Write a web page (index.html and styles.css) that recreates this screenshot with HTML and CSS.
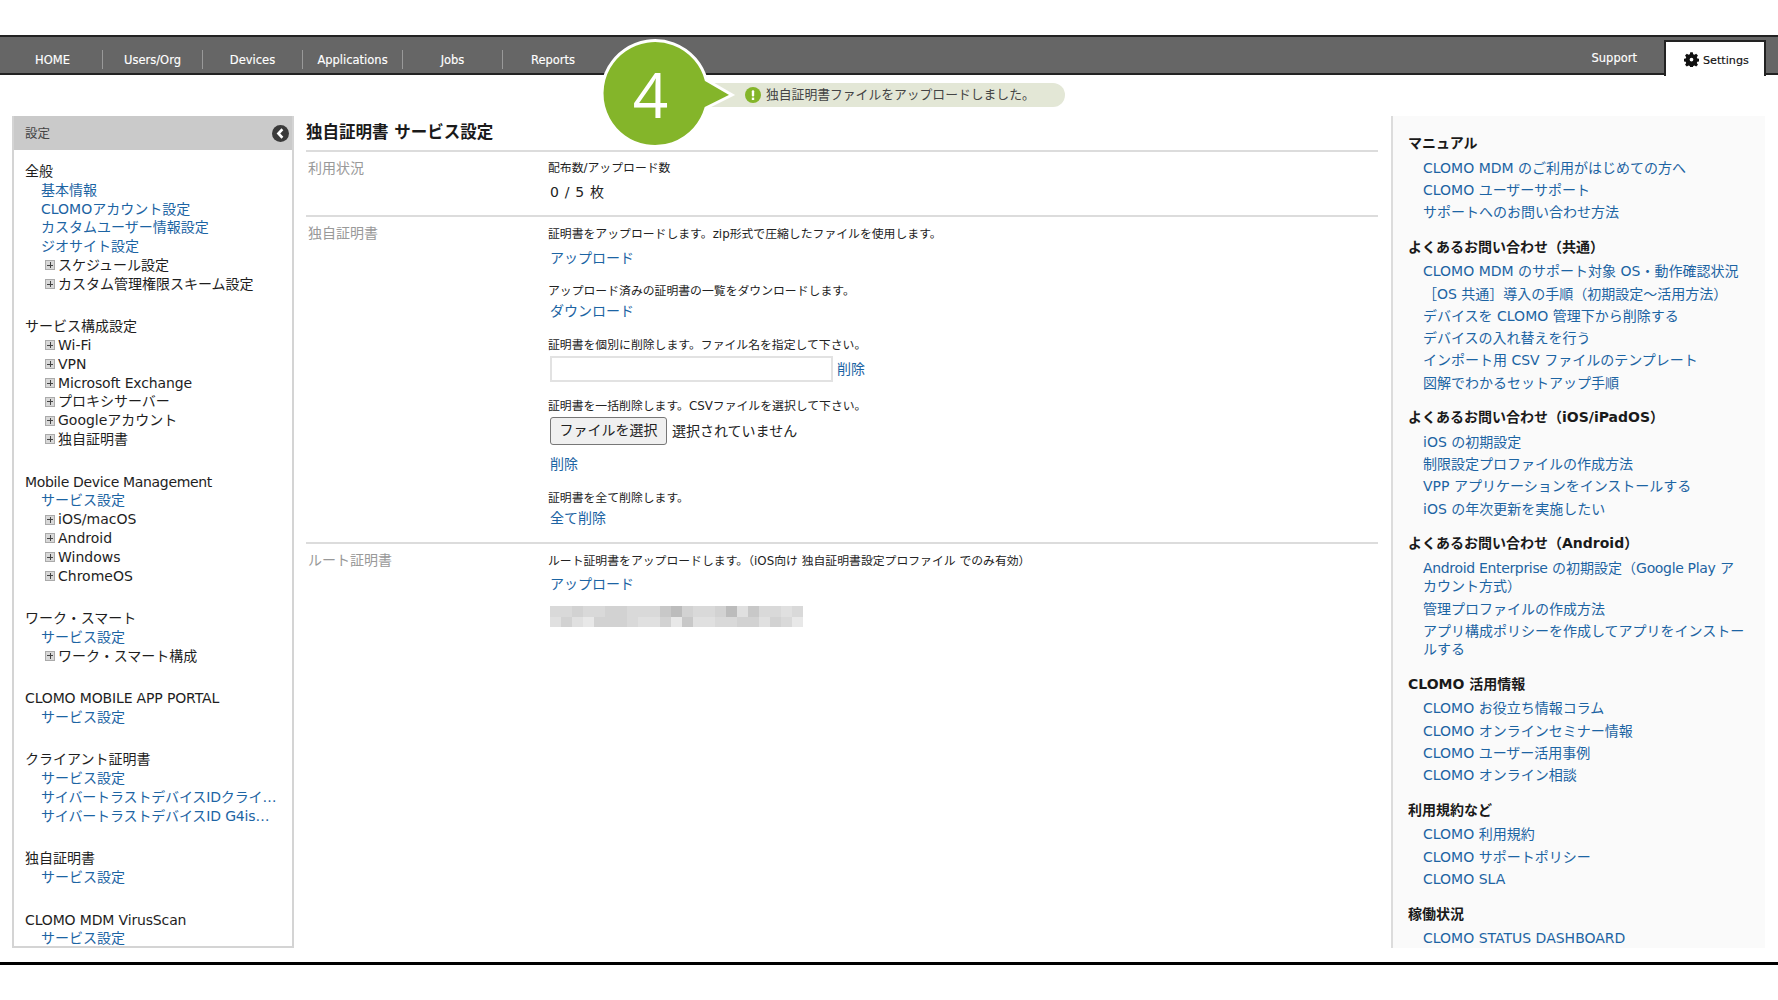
FILE: index.html
```html
<!DOCTYPE html>
<html lang="ja">
<head>
<meta charset="utf-8">
<title>CLOMO</title>
<link rel="stylesheet" href="styles.css">
</head>
<body>
<div class="frame">
  <header class="nav">
    <ul class="nav-items">
      <li>HOME</li><li>Users/Org</li><li>Devices</li><li>Applications</li><li>Jobs</li><li>Reports</li>
    </ul>
    <div class="nav-right">
      <span class="support">Support</span>
      <span class="settings-tab">
        <svg class="gear" viewBox="0 0 24 24"><path d="M10 .5h4l.7 3.200 2 .8 2.800-1.800 2.800 2.800-1.800 2.800.8 2 3.200.7v4l-3.200.7-.8 2 1.800 2.800-2.800 2.800-2.800-1.800-2 .8-.7 3.200h-4l-.7-3.200-2-.8-2.800 1.800-2.800-2.800 1.800-2.800-.8-2-3.200-.7v-4l3.200-.7.8-2-1.800-2.800 2.800-2.800 2.800 1.800 2-.8zM12 9a3 3 0 1 0 0 6 3 3 0 0 0 0-6z" fill-rule="evenodd"/></svg>
        <span class="settings-label">Settings</span>
      </span>
    </div>
  </header>

  <div class="content">
    <aside class="sidebar">
      <div class="side-head"><span class="side-label">設定</span>
        <svg class="collapse" viewBox="0 0 16 16"><circle cx="8" cy="8" r="8" fill="#3a3a3a"/><path d="M9.800 4 6 8l3.800 4" fill="none" stroke="#fff" stroke-width="2.400"/></svg>
      </div>
      <div class="side-body">
        <div class="group">
          <div class="g-title">全般</div>
          <a class="s-link">基本情報</a>
          <a class="s-link">CLOMOアカウント設定</a>
          <a class="s-link">カスタムユーザー情報設定</a>
          <a class="s-link">ジオサイト設定</a>
          <div class="s-tree"><i class="plus"></i>スケジュール設定</div>
          <div class="s-tree"><i class="plus"></i>カスタム管理権限スキーム設定</div>
        </div>
        <div class="group">
          <div class="g-title">サービス構成設定</div>
          <div class="s-tree"><i class="plus"></i>Wi-Fi</div>
          <div class="s-tree"><i class="plus"></i>VPN</div>
          <div class="s-tree lat-s"><i class="plus"></i>Microsoft Exchange</div>
          <div class="s-tree"><i class="plus"></i>プロキシサーバー</div>
          <div class="s-tree"><i class="plus"></i>Googleアカウント</div>
          <div class="s-tree"><i class="plus"></i>独自証明書</div>
        </div>
        <div class="group">
          <div class="g-title lat">Mobile Device Management</div>
          <a class="s-link">サービス設定</a>
          <div class="s-tree"><i class="plus"></i>iOS/macOS</div>
          <div class="s-tree"><i class="plus"></i>Android</div>
          <div class="s-tree"><i class="plus"></i>Windows</div>
          <div class="s-tree"><i class="plus"></i>ChromeOS</div>
        </div>
        <div class="group">
          <div class="g-title">ワーク・スマート</div>
          <a class="s-link">サービス設定</a>
          <div class="s-tree"><i class="plus"></i>ワーク・スマート構成</div>
        </div>
        <div class="group">
          <div class="g-title lat-s">CLOMO MOBILE APP PORTAL</div>
          <a class="s-link">サービス設定</a>
        </div>
        <div class="group">
          <div class="g-title">クライアント証明書</div>
          <a class="s-link">サービス設定</a>
          <a class="s-link lat-s">サイバートラストデバイスIDクライ…</a>
          <a class="s-link lat-s">サイバートラストデバイスID G4is…</a>
        </div>
        <div class="group">
          <div class="g-title">独自証明書</div>
          <a class="s-link">サービス設定</a>
        </div>
        <div class="group">
          <div class="g-title lat-s">CLOMO MDM VirusScan</div>
          <a class="s-link">サービス設定</a>
        </div>
      </div>
    </aside>

    <main class="main">
      <h1 class="title">独自証明書 サービス設定</h1>
      <section class="row">
        <div class="label">利用状況</div>
        <div class="body first">
          <p class="note">配布数/アップロード数</p>
          <p class="count">0 / 5 枚</p>
        </div>
      </section>
      <section class="row">
        <div class="label">独自証明書</div>
        <div class="body">
          <p class="note">証明書をアップロードします。zip形式で圧縮したファイルを使用します。</p>
          <a class="m-link">アップロード</a>
          <p class="note gap">アップロード済みの証明書の一覧をダウンロードします。</p>
          <a class="m-link tight">ダウンロード</a>
          <p class="note gap2">証明書を個別に削除します。ファイル名を指定して下さい。</p>
          <div class="input-line"><span class="text-input"></span><a class="m-link inline">削除</a></div>
          <p class="note gap2">証明書を一括削除します。CSVファイルを選択して下さい。</p>
          <div class="file-line"><span class="file-btn">ファイルを選択</span><span class="file-none">選択されていません</span></div>
          <a class="m-link del">削除</a>
          <p class="note gap2">証明書を全て削除します。</p>
          <a class="m-link close">全て削除</a>
        </div>
      </section>
      <section class="row">
        <div class="label">ルート証明書</div>
        <div class="body">
          <p class="note">ルート証明書をアップロードします。（iOS向け 独自証明書設定プロファイル でのみ有効）</p>
          <a class="m-link root">アップロード</a>
          <div class="blur">
            <i class="b2"></i><i class="b2"></i><i class="b3"></i><i class="b2"></i><i class="b2"></i><i class="b3"></i><i class="b3"></i><i class="b2"></i><i class="b2"></i><i class="b2"></i><i class="b4"></i><i class="b5"></i><i class="b3"></i><i class="b2"></i><i class="b2"></i><i class="b3"></i><i class="b5"></i><i class="b1"></i><i class="b4"></i><i class="b2"></i><i class="b2"></i><i class="b1"></i><i class="b2"></i>
            <i class="b1"></i><i class="b3"></i><i class="b1"></i><i class="b0"></i><i class="b3"></i><i class="b3"></i><i class="b3"></i><i class="b2"></i><i class="b1"></i><i class="b1"></i><i class="b3"></i><i class="b0"></i><i class="b4"></i><i class="b1"></i><i class="b1"></i><i class="b2"></i><i class="b2"></i><i class="b3"></i><i class="b3"></i><i class="b1"></i><i class="b3"></i><i class="b2"></i><i class="b0"></i>
          </div>
        </div>
      </section>
    </main>

    <aside class="help">
      <h2>マニュアル</h2>
      <ul>
        <li>CLOMO MDM のご利用がはじめての方へ</li>
        <li>CLOMO ユーザーサポート</li>
        <li>サポートへのお問い合わせ方法</li>
      </ul>
      <h2>よくあるお問い合わせ（共通）</h2>
      <ul>
        <li>CLOMO MDM のサポート対象 OS・動作確認状況</li>
        <li>［OS 共通］導入の手順（初期設定〜活用方法）</li>
        <li>デバイスを CLOMO 管理下から削除する</li>
        <li>デバイスの入れ替えを行う</li>
        <li>インポート用 CSV ファイルのテンプレート</li>
        <li>図解でわかるセットアップ手順</li>
      </ul>
      <h2>よくあるお問い合わせ（iOS/iPadOS）</h2>
      <ul>
        <li>iOS の初期設定</li>
        <li>制限設定プロファイルの作成方法</li>
        <li>VPP アプリケーションをインストールする</li>
        <li>iOS の年次更新を実施したい</li>
      </ul>
      <h2>よくあるお問い合わせ（Android）</h2>
      <ul>
        <li><span class="lat">Android Enterprise</span> の初期設定（<span class="lat">Google Play</span> ア<br>カウント方式）</li>
        <li>管理プロファイルの作成方法</li>
        <li>アプリ構成ポリシーを作成してアプリをインストー<br>ルする</li>
      </ul>
      <h2>CLOMO 活用情報</h2>
      <ul>
        <li>CLOMO お役立ち情報コラム</li>
        <li>CLOMO オンラインセミナー情報</li>
        <li>CLOMO ユーザー活用事例</li>
        <li>CLOMO オンライン相談</li>
      </ul>
      <h2>利用規約など</h2>
      <ul>
        <li>CLOMO 利用規約</li>
        <li>CLOMO サポートポリシー</li>
        <li>CLOMO SLA</li>
      </ul>
      <h2>稼働状況</h2>
      <ul>
        <li>CLOMO STATUS DASHBOARD</li>
      </ul>
    </aside>
  </div>
</div>

<div class="flash">
  <svg class="flash-icon" viewBox="0 0 16 16"><circle cx="8" cy="8" r="8" fill="#84b52a"/><rect x="6.800" y="3.200" width="2.400" height="6.400" rx="1" fill="#fff"/><rect x="6.800" y="10.600" width="2.400" height="2.400" fill="#fff"/></svg>
  <span>独自証明書ファイルをアップロードしました。</span>
</div>
<svg class="badge" viewBox="0 0 140 120">
  <path d="M108.250 45 134 60 108 73A53 53 0 1 1 108.250 45z" fill="#84b52a" stroke="#fff" stroke-width="3"/>
  <text class="badge-num" x="52.500" y="83" text-anchor="middle">4</text>
</svg>
</body>
</html>
```
FILE: styles.css
```css
* { box-sizing: border-box; }
html, body { margin: 0; padding: 0; background: #fff; }
body {
  height: 1000px;
  overflow: hidden;
  position: relative;
  font-family: "DejaVu Sans", "Noto Sans CJK JP", sans-serif;
  font-size: 14px;
  color: #222;
}
p, h1, h2, ul { margin: 0; padding: 0; }
ul { list-style: none; }
a { display: block; color: #1c64a3; }
.lat { letter-spacing: -0.33px; }
.lat-s { letter-spacing: -0.15px; }

.frame {
  margin-top: 35px;
  height: 930px;
  border-bottom: 3px solid #000;
  display: flex;
  flex-direction: column;
}

/* top navigation */
.nav {
  height: 40px;
  flex: none;
  background: #666;
  border-top: 2px solid #222;
  border-bottom: 2px solid #222;
  display: flex;
  justify-content: space-between;
  padding-left: 3px;
  color: #fff;
  font-size: 11.500px;
  -webkit-text-stroke: 0.15px;
}
.nav-items { display: flex; padding-top: 13px; }
.nav-items li {
  width: 100px;
  height: 19px;
  line-height: 21px;
  text-align: center;
  border-right: 1px solid #999;
}
.nav-items li:last-child { border-right: 0; }
.nav-right { display: flex; padding-right: 12px; }
.support { margin-right: 27px; padding-top: 14px; }
.settings-tab {
  width: 102px;
  height: 36px;
  margin-top: 3px;
  background: #fff;
  color: #111;
  border: 2px solid #222;
  border-bottom: 0;
  display: flex;
  align-items: center;
  gap: 4px;
  padding-left: 18px;
}
.settings-label { font-size: 11.200px; padding-top: 2px; }
.gear { width: 15px; height: 15px; fill: #111; flex: none; }

/* three columns */
.content {
  flex: 1;
  min-height: 0;
  display: grid;
  grid-template-columns: 282px 1072px 375px;
  column-gap: 12px;
  padding: 41px 12px 14px;
}
.content > .help { margin-left: 1px; }

/* sidebar */
.sidebar {
  border: 2px solid #d4d4d4;
  border-top: 0;
  overflow: hidden;
}
.side-head {
  height: 34px;
  margin: 0 -2px;
  background: #cacaca;
  display: flex;
  align-items: center;
  justify-content: space-between;
  padding: 0 5px 0 13px;
  font-size: 12.500px;
  color: #444;
}
.side-label { margin-bottom: 2px; }
.collapse { width: 17px; height: 17px; }
.side-body { padding: 12px 0 0 11px; line-height: 18.800px; white-space: nowrap; }
.group { margin-bottom: 23.700px; }
.g-title { color: #1e1e1e; }
.s-link { padding-left: 16px; }
.s-tree { padding-left: 20px; display: flex; align-items: center; color: #1e1e1e; }
.plus {
  width: 10px;
  height: 10px;
  margin-right: 3px;
  flex: none;
  position: relative;
  background: #d8d8d8;
  border: 1px solid #aaa;
}
.plus::before, .plus::after { content: ""; position: absolute; background: #444; }
.plus::before { left: 1px; right: 1px; height: 1px; top: 3.500px; }
.plus::after { top: 1px; bottom: 1px; left: 3.500px; width: 1px; }

/* main column */
.main { min-width: 0; }
.title {
  height: 34px;
  padding-top: 5px;
  font-size: 16.500px;
  line-height: 24px;
  font-weight: 700;
  color: #1a1a1a;
}
.row {
  display: flex;
  border-top: 2px solid #dcdcdc;
}
.row:nth-of-type(1) { height: 65px; }
.row:nth-of-type(2) { height: 327px; }
.label {
  width: 242px;
  flex: none;
  padding: 7px 0 0 2px;
  color: #999;
  line-height: 18px;
}
.body { padding-top: 8px; flex: 1; }
.body.first { padding-top: 7px; }
.note { font-size: 11.850px; line-height: 18px; color: #222; }
.count { margin-top: 5px; line-height: 20px; letter-spacing: 0.7px; padding-left: 2px; }
.m-link { padding-left: 2px; margin-top: 5px; line-height: 20px; }
.m-link.tight { margin-top: 1px; }
.m-link.inline { margin: 0 0 0 4px; padding: 0; }
.m-link.close { margin-top: 0.500px; }
.m-link.root { margin-top: 4px; }
.gap { margin-top: 14px; }
.gap2 { margin-top: 15px; }
.input-line { display: flex; align-items: center; margin-top: 2px; }
.text-input {
  width: 283px;
  height: 26px;
  margin-left: 2px;
  background: #fff;
  border: 2px solid #e2e2e2;
}
.file-line { display: flex; align-items: center; margin-top: 2px; }
.file-btn {
  width: 117px;
  height: 28px;
  margin-left: 2px;
  line-height: 25px;
  text-align: center;
  background: #f0f0f0;
  border: 1px solid #777;
  border-radius: 3px;
  color: #222;
}
.file-none { margin: 0 0 2px 5px; color: #222; }
.m-link.del { margin-top: 9px; }
.blur {
  display: grid;
  grid-template-columns: repeat(23, 11px);
  grid-auto-rows: 10.500px;
  margin: 12px 0 0 2px;
}
.b0 { background: #e8e8e8; }
.b1 { background: #e0e0e0; }
.b2 { background: #d9d9d9; }
.b3 { background: #d2d2d2; }
.b4 { background: #c8c8c8; }
.b5 { background: #bcbcbc; }

/* help column */
.help {
  background: #fafafa;
  border-left: 2px solid #dcdcdc;
  padding: 18px 0 0 15px;
  overflow: hidden;
}
.help h2 {
  font-size: 14px;
  line-height: 18.800px;
  font-weight: 700;
  color: #1a1a1a;
  margin-bottom: 5.800px;
}
.help ul { margin-bottom: 12.200px; padding: 0 0 0 15px; }
.help li { line-height: 18.500px; padding-bottom: 3.800px; color: #1c64a3; }

/* overlay: completion message and step badge */
.flash {
  position: absolute;
  left: 700px;
  top: 83px;
  width: 365px;
  height: 24px;
  background: #e3e7d6;
  border-radius: 12px;
  display: flex;
  align-items: center;
  padding-left: 45px;
  gap: 5px;
  font-size: 12.800px;
  color: #444;
}
.flash span { margin-bottom: 4px; }
.flash-icon { width: 16px; height: 16px; flex: none; }
.badge { position: absolute; left: 598px; top: 35px; width: 140px; height: 120px; }
.badge-num { font-family: "Open Sans", sans-serif; font-size: 62px; fill: #fff; }
```
